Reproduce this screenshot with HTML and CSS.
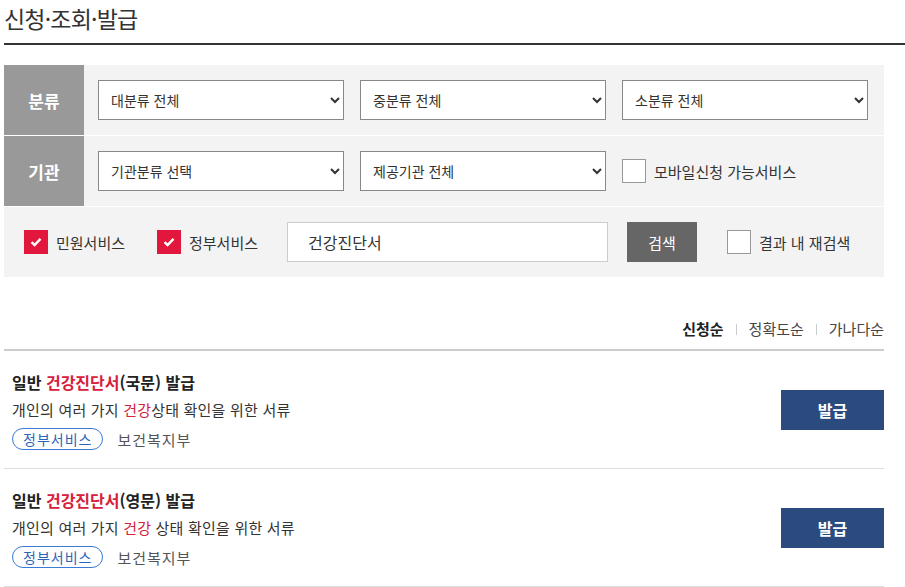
FILE: index.html
```html
<!DOCTYPE html>
<html lang="ko">
<head>
  <meta charset="UTF-8">
  <meta name="viewport" content="width=device-width, initial-scale=1.0">
  <title>신청·조회·발급</title>
  <link rel="stylesheet" href="styles.css">
</head>
<body>
  <header class="page-head">
    <h1>신청·조회·발급</h1>
  </header>

  <div class="content">
    <div class="filter">
      <div class="filter-row">
        <div class="filter-label">분류</div>
        <div class="filter-body">
          <select class="sel"><option>대분류 전체</option></select>
          <select class="sel"><option>중분류 전체</option></select>
          <select class="sel"><option>소분류 전체</option></select>
        </div>
      </div>
      <div class="filter-row">
        <div class="filter-label">기관</div>
        <div class="filter-body">
          <select class="sel"><option>기관분류 선택</option></select>
          <select class="sel"><option>제공기관 전체</option></select>
          <label class="chk"><span class="box"></span>모바일신청 가능서비스</label>
        </div>
      </div>
      <div class="filter-row search-row">
        <label class="chk on"><span class="box">
          <svg width="12" height="10" viewBox="0 0 12 10"><path d="M1.5 5.2 4.6 8 10.5 1.8" fill="none" stroke="#fff" stroke-width="2.4"/></svg>
        </span>민원서비스</label>
        <label class="chk on"><span class="box">
          <svg width="12" height="10" viewBox="0 0 12 10"><path d="M1.5 5.2 4.6 8 10.5 1.8" fill="none" stroke="#fff" stroke-width="2.4"/></svg>
        </span>정부서비스</label>
        <input type="text" class="keyword" value="건강진단서">
        <button class="search-btn">검색</button>
        <label class="chk"><span class="box"></span>결과 내 재검색</label>
      </div>
    </div>

    <div class="sort">
      <a class="active">신청순</a>
      <span class="bar"></span>
      <a>정확도순</a>
      <span class="bar"></span>
      <a>가나다순</a>
    </div>

    <ul class="result">
      <li class="item">
        <div class="item-info">
          <div class="item-title">일반 <em>건강진단서</em>(국문) 발급</div>
          <div class="item-desc">개인의 여러 가지 <em>건강</em>상태 확인을 위한 서류</div>
          <div class="item-meta"><span class="tag">정부서비스</span><span class="org">보건복지부</span></div>
        </div>
        <button class="issue-btn">발급</button>
      </li>
      <li class="item">
        <div class="item-info">
          <div class="item-title">일반 <em>건강진단서</em>(영문) 발급</div>
          <div class="item-desc">개인의 여러 가지 <em>건강</em> 상태 확인을 위한 서류</div>
          <div class="item-meta"><span class="tag">정부서비스</span><span class="org">보건복지부</span></div>
        </div>
        <button class="issue-btn">발급</button>
      </li>
    </ul>
  </div>
</body>
</html>
```

FILE: styles.css
```css
body {
  margin: 0;
  padding: 0 0 0 4px;
  font-family: "Noto Sans CJK KR", "Noto Sans", sans-serif;
  color: #333;
  background: #fff;
}
.page-head {
  border-bottom: 2px solid #333;
  height: 43px;
}
h1 {
  margin: 0;
  padding-top: 2px;
  font-size: 23px;
  font-weight: 400;
  line-height: 33px;
  color: #333;
  letter-spacing: -0.8px;
}
.content {
  width: 880px;
}
.filter {
  margin-top: 20px;
  background: #f3f3f3;
}
.filter-row {
  display: flex;
  height: 70px;
  border-bottom: 1px solid #fff;
}
.filter-row:last-child {
  border-bottom: none;
}
.filter-label {
  width: 80px;
  background: #999;
  color: #fff;
  font-size: 17px;
  font-weight: bold;
  display: flex;
  align-items: center;
  justify-content: center;
}
.filter-body {
  display: flex;
  align-items: center;
  gap: 16px;
  padding-left: 14px;
}
.sel {
  width: 246px;
  height: 40px;
  border: 1px solid #888;
  border-radius: 0;
  background: #fff;
  padding: 0 8px;
  font-family: inherit;
  font-size: 14px;
  color: #333;
}
.chk {
  display: flex;
  align-items: center;
  gap: 8px;
  font-size: 15px;
  color: #333;
}
.chk .box {
  width: 22px;
  height: 22px;
  border: 1px solid #999;
  background: #fff;
  display: flex;
  align-items: center;
  justify-content: center;
}
.chk.on .box {
  background: #e2173d;
  border-color: #e2173d;
}
.search-row {
  align-items: center;
  padding-left: 20px;
}
.search-row .chk {
  margin-right: 32px;
}
.search-row .chk:nth-child(2) {
  margin-right: 29px;
}
.keyword {
  width: 321px;
  height: 40px;
  box-sizing: border-box;
  border: 1px solid #ccc;
  padding: 0 20px;
  font-family: inherit;
  font-size: 16px;
  color: #333;
}
.search-btn {
  margin-left: 19px;
  width: 70px;
  height: 40px;
  border: none;
  background: #666;
  color: #fff;
  font-family: inherit;
  font-size: 15px;
  margin-right: 30px;
}
.sort {
  display: flex;
  justify-content: flex-end;
  align-items: center;
  gap: 12px;
  margin-top: 41px;
  font-size: 15px;
  line-height: 22px;
}
.sort a {
  color: #444;
}
.sort a.active {
  font-weight: bold;
  color: #222;
}
.sort .bar {
  width: 1px;
  height: 11px;
  background: #ccc;
}
.result {
  list-style: none;
  margin: 9px 0 0;
  padding: 0;
  border-top: 2px solid #ccc;
}
.item {
  display: flex;
  align-items: center;
  justify-content: space-between;
  padding: 19px 0 18px 8px;
  border-bottom: 1px solid #ddd;
}
.item em {
  font-style: normal;
  color: #d7203b;
}
.item-title {
  font-size: 16px;
  font-weight: bold;
  color: #222;
  line-height: 24px;
}
.item-desc {
  font-size: 15px;
  line-height: 24px;
  margin-top: 4px;
  color: #333;
  letter-spacing: 0.2px;
}
.item-meta {
  display: flex;
  align-items: center;
  gap: 14px;
  margin-top: 6px;
}
.tag {
  border: 1px solid #3a7bd5;
  border-radius: 11px;
  padding: 0 10px;
  height: 20px;
  line-height: 20px;
  font-size: 14px;
  letter-spacing: 1px;
  color: #2a66b8;
}
.org {
  font-size: 15px;
  color: #555;
  letter-spacing: 1px;
}
.issue-btn {
  width: 103px;
  height: 40px;
  border: none;
  background: #2b4a7e;
  color: #fff;
  font-family: inherit;
  font-size: 16px;
  font-weight: bold;
}
```
